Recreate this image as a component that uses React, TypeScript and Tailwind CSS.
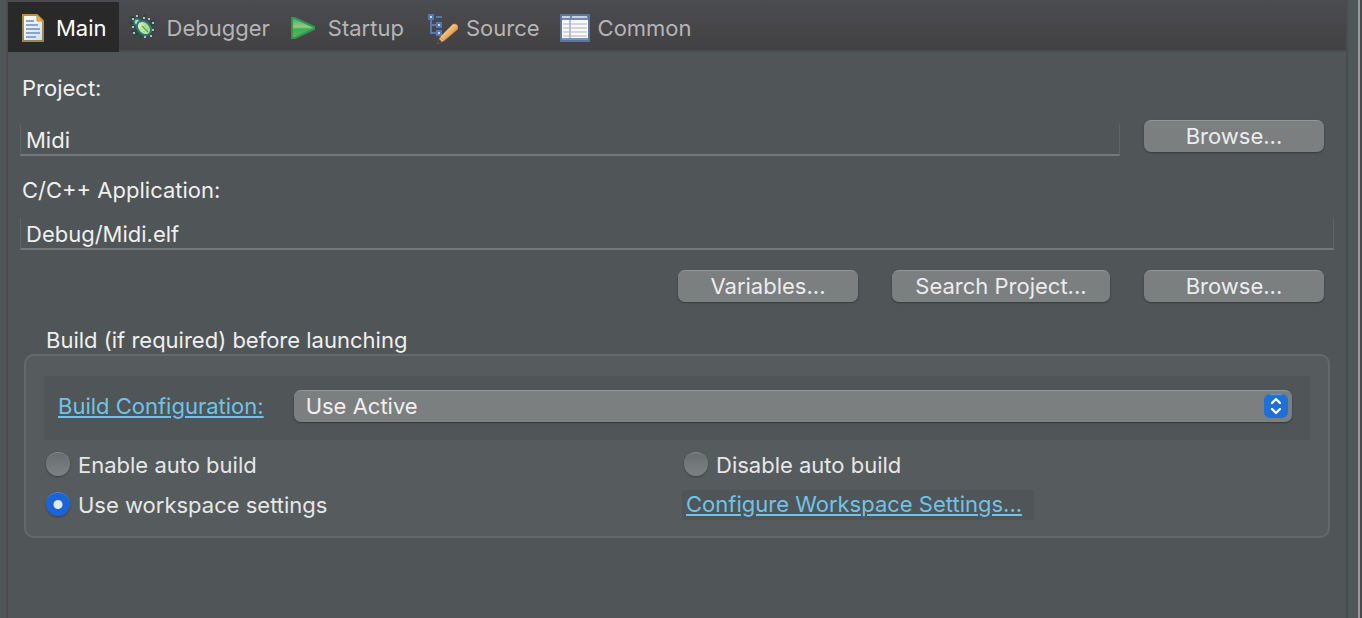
import { useState, type ComponentType, type ReactNode } from "react";

function DocumentIcon() {
  return (
    <svg width="22" height="28" viewBox="0 0 22 28" aria-hidden="true">
      <defs>
        <linearGradient id="page" x1="0" y1="0" x2="1" y2="1">
          <stop offset="0" stopColor="#ffffff" />
          <stop offset="1" stopColor="#cfdcf0" />
        </linearGradient>
        <linearGradient id="pageEdge" x1="0" y1="0" x2="0" y2="1">
          <stop offset="0" stopColor="#c28f35" />
          <stop offset="1" stopColor="#8f8560" />
        </linearGradient>
      </defs>
      <path d="M1 1h14l6 6v20H1z" fill="url(#page)" stroke="url(#pageEdge)" strokeWidth="2" />
      <path d="M15 1v6h6z" fill="#e2b25c" stroke="#c28f35" />
      <path d="M4 7h8M4 11h12M4 15h14M4 19h14M4 23h10" stroke="#8ba4cf" strokeWidth="2" />
    </svg>
  );
}

function BugIcon() {
  return (
    <svg width="28" height="30" viewBox="0 0 28 30" aria-hidden="true">
      <defs>
        <linearGradient id="bug" x1="0" y1="0" x2="1" y2="1">
          <stop offset="0" stopColor="#f0f8c0" />
          <stop offset="1" stopColor="#8fcf7c" />
        </linearGradient>
      </defs>
      <path
        d="M1 4h3l3 4M9 1v3l1 3M17 1l-3 6M26 6l-5 4M26 12h-5M26 18h-5M24 22l-4-2M0 10h4l3 1M2 18h4l3-1M6 23l4-4M12 28v-6"
        fill="none"
        stroke="#1d4a3e"
        strokeWidth="1.5"
      />
      <path d="M3 6h2M7 3h2M14 5h2M19 6h2M23 10h2M23 17h2M3 14h2M4 20h2M15 24h2M21 23h2" stroke="#b3bcb8" strokeWidth="2" />
      <circle cx="8" cy="9" r="3" fill="#b9dd91" stroke="#277e83" strokeWidth="1.5" />
      <ellipse cx="15" cy="15" rx="6" ry="8" fill="url(#bug)" stroke="#267a80" strokeWidth="2" transform="rotate(-45 15 15)" />
      <path d="M13 13l6 6" stroke="#5da455" strokeWidth="1.4" />
      <path d="M12 16v1M16 12v1M15 18v1M19 15v1" stroke="#8bc877" strokeWidth="1.2" />
    </svg>
  );
}

function RunIcon() {
  return (
    <svg width="26" height="24" viewBox="0 0 26 24" aria-hidden="true">
      <defs>
        <linearGradient id="run" x1="0" y1="0" x2="0" y2="1">
          <stop offset="0" stopColor="#4fa869" />
          <stop offset="0.45" stopColor="#92cb83" />
          <stop offset="0.55" stopColor="#3fae52" />
          <stop offset="1" stopColor="#56bd5b" />
        </linearGradient>
      </defs>
      <path d="M2 2h3l19 9v2L5 22H2z" fill="url(#run)" stroke="#319653" strokeWidth="2" />
    </svg>
  );
}

function SourceIcon() {
  return (
    <svg width="30" height="32" viewBox="0 0 30 32" aria-hidden="true">
      <defs>
        <linearGradient id="pencil" x1="0" y1="0" x2="1" y2="1">
          <stop offset="0.2" stopColor="#fbe0a4" />
          <stop offset="0.8" stopColor="#df8433" />
        </linearGradient>
      </defs>
      <path d="M8 5h6M3 8v13h6M3 13h6" fill="none" stroke="#5378b5" strokeWidth="2" />
      <g fill="#c8d9f4" stroke="#5378b5" strokeWidth="2">
        <path d="M1 3h4v4H1zM9 11h4v4H9zM9 19h4v4H9z" />
      </g>
      <path d="M12 25L25 12h3l2 2v3L16 29z" fill="url(#pencil)" stroke="#b56e2c" strokeWidth="0.6" />
      <path d="M12 25l4 4-7 3z" fill="#d9b78f" />
      <path d="M11 27l3 3-5 2z" fill="#5b392c" />
    </svg>
  );
}

function TableIcon() {
  return (
    <svg width="30" height="28" viewBox="0 0 30 28" aria-hidden="true">
      <path d="M1 1h28v26H1z" fill="#f8f9fc" stroke="#5f7499" strokeWidth="2" />
      <path d="M2 2h26v4H2z" fill="#6e88b4" />
      <path d="M2 3h8M12 3h15" stroke="#c3d0e4" strokeWidth="2" />
      <path d="M3 10h24M3 14h24M3 18h24M3 22h24" stroke="#d3d6df" strokeWidth="2" />
      <path d="M10 6v20" stroke="#b6bfd0" strokeWidth="2" />
      <path d="M2 25h26" stroke="#7b91b8" strokeWidth="2" />
    </svg>
  );
}

type Tab = {
  id: string;
  label: string;
  icon: ComponentType;
  className: string;
};

const tabs: readonly Tab[] = [
  { id: "main", label: "Main", icon: DocumentIcon, className: "gap-3 pl-3.5 pr-3" },
  { id: "debugger", label: "Debugger", icon: BugIcon, className: "gap-2.5 pl-2.5 pr-3" },
  { id: "startup", label: "Startup", icon: RunIcon, className: "gap-3 pl-2 pr-3" },
  { id: "source", label: "Source", icon: SourceIcon, className: "gap-2 pl-3 pr-3" },
  { id: "common", label: "Common", icon: TableIcon, className: "gap-2 pl-2 pr-3" },
];

function PushButton({ className, children }: { className: string; children: ReactNode }) {
  return (
    <button
      type="button"
      className={`h-8 shrink-0 rounded-[7px] border-t border-[#929697] bg-[#7b7f80] pb-0.5 text-center text-[#ececec] shadow-[0_1px_2px_rgba(0,0,0,0.35)] ${className}`}
    >
      {children}
    </button>
  );
}

const fieldClass =
  "h-8 w-full min-w-0 border-x border-b-2 border-x-[#5f6567] border-b-[#74797b] bg-transparent px-[5px] pt-0.5 text-[#efefef] outline-none";

type RadioProps = {
  label: string;
  value: string;
  selected: string;
  onSelect: (value: string) => void;
};

function Radio({ label, value, selected, onSelect }: RadioProps) {
  return (
    <label className="flex h-10 items-center gap-2 pl-0.5 text-[#e6e7e7]">
      <input
        type="radio"
        name="auto-build"
        value={value}
        checked={selected === value}
        onChange={() => onSelect(value)}
        className="h-6 w-6 shrink-0 appearance-none rounded-full border-t border-[#898d8e] bg-linear-to-b from-[#696d6f] to-[#7e8283] shadow-[0_1px_2px_rgba(0,0,0,0.35)] checked:border-[#4484e6] checked:bg-[radial-gradient(circle,#dfe9fb_4px,#1c62d8_5px)]"
      />
      <span className="pt-0.5">{label}</span>
    </label>
  );
}

export default function App() {
  const [activeTab, setActiveTab] = useState("main");
  const [autoBuild, setAutoBuild] = useState("workspace");

  return (
    <div className="flex min-h-screen bg-[#505658] pl-1.5 font-['Inter',sans-serif] text-[22px] leading-7 text-[#efefef]">
      <main className="min-w-0 flex-1 border-x-2 border-[#4a4c4f]">
        <div role="tablist" className="flex h-[52px] border-b-2 border-[#4a4c4d] bg-linear-to-b from-[#4b4c50] to-[#424143] pt-0.5">
          {tabs.map((tab) => {
            const active = tab.id === activeTab;
            const Icon = tab.icon;

            return (
              <button
                key={tab.id}
                type="button"
                role="tab"
                aria-selected={active}
                onClick={() => setActiveTab(tab.id)}
                className={[
                  "flex h-[50px] shrink-0 items-center pt-0.5",
                  tab.className,
                  active ? "bg-[#292929] text-white" : "text-[#b5b5b6]",
                ].join(" ")}
              >
                <Icon />
                <span>{tab.label}</span>
              </button>
            );
          })}
        </div>

        <div className="px-3 pt-[22px]">
          <label htmlFor="project" className="block pl-0.5">
            Project:
          </label>
          <div className="mt-[18px] flex items-start gap-6 pr-2.5">
            <div className="min-w-0 flex-1 pt-1">
              <input id="project" defaultValue="Midi" className={fieldClass} />
            </div>
            <PushButton className="w-[180px]">Browse...</PushButton>
          </div>

          <label htmlFor="application" className="mt-5 block pl-0.5">
            C/C++ Application:
          </label>
          <input id="application" defaultValue="Debug/Midi.elf" className={`mt-3.5 block ${fieldClass}`} />

          <div className="mt-5 flex justify-end gap-[34px] pr-2.5">
            <PushButton className="w-[180px]">Variables...</PushButton>
            <PushButton className="w-[218px]">Search Project...</PushButton>
            <PushButton className="w-[180px]">Browse...</PushButton>
          </div>

          <p id="build-title" className="mt-6 pl-[26px]">
            Build (if required) before launching
          </p>
          <fieldset
            aria-labelledby="build-title"
            className="mr-1 ml-1 rounded-[10px] border-2 border-[#66696b] bg-[#565b5d] px-[18px] pt-5 pb-3"
          >
            <div className="flex items-center gap-[30px] bg-[#505557] pt-3.5 pr-[18px] pb-[18px] pl-3.5">
              <a href="#build-configuration" className="shrink-0 text-[#6fc3ea] underline decoration-2 underline-offset-2">
                Build Configuration:
              </a>
              <div className="relative min-w-0 flex-1">
                <select
                  aria-label="Build Configuration"
                  className="block h-8 w-full appearance-none rounded-[7px] border-t border-[#929697] bg-[#7b7f80] px-3 pb-0.5 text-[#efefef] shadow-[0_1px_2px_rgba(0,0,0,0.35)]"
                >
                  <option>Use Active</option>
                </select>
                <svg className="pointer-events-none absolute top-1 right-1" width="24" height="24" viewBox="0 0 24 24" aria-hidden="true">
                  <rect width="24" height="24" rx="6" fill="#1f70d6" />
                  <path d="M6 .6h12" stroke="#5a9be8" />
                  <path d="M8 9l4-4 4 4M8 15l4 4 4-4" fill="none" stroke="#fff" strokeWidth="2.2" strokeLinecap="round" strokeLinejoin="round" />
                </svg>
              </div>
            </div>

            <div className="mt-1 grid grid-cols-2 gap-x-2.5">
              <Radio label="Enable auto build" value="enable" selected={autoBuild} onSelect={setAutoBuild} />
              <Radio label="Disable auto build" value="disable" selected={autoBuild} onSelect={setAutoBuild} />
              <Radio label="Use workspace settings" value="workspace" selected={autoBuild} onSelect={setAutoBuild} />
              <div className="flex h-10 items-center pt-0.5">
                <a
                  href="#workspace-settings"
                  className="h-[30px] bg-[#505557] pr-3 pl-1 text-[#6fc3ea] underline decoration-2 underline-offset-2"
                >
                  Configure Workspace Settings...
                </a>
              </div>
            </div>
          </fieldset>
        </div>
      </main>
      <div className="ml-2.5 w-1 shrink-0 border-l-2 border-[#999b9c] bg-[#484b4d]" />
    </div>
  );
}
